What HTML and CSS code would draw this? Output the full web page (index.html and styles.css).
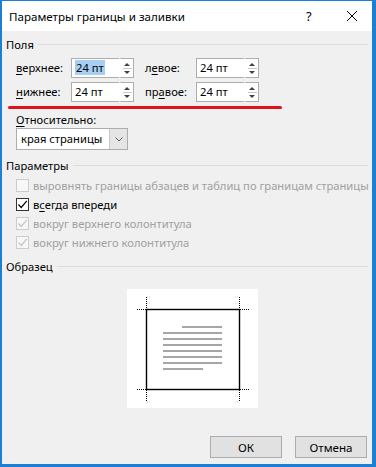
FILE: index.html
```html
<!DOCTYPE html>
<html lang="ru">

<head>
    <meta charset="UTF-8">
    <title>Параметры границы и заливки</title>
    <link rel="stylesheet" href="styles.css">
</head>

<body>
    <div class="window">
        <div class="titlebar">
            <span class="title">Параметры границы и заливки</span>
            <span class="help">?</span>
            <span class="close">
                <svg width="12" height="12" viewBox="0 0 12 12"><path d="M1 1 L11 11 M11 1 L1 11" stroke="#000" stroke-width="1" fill="none"/></svg>
            </span>
        </div>

        <div class="content">
            <div class="group-head"><span>Поля</span><div class="rule"></div></div>

            <div class="margins">
                <label><u>в</u>ерхнее:</label>
                <div class="spin"><div class="field"><span class="selected">24 пт</span></div><div class="arrows"><i class="up"></i><b></b><i class="down"></i></div></div>
                <label>л<u>е</u>вое:</label>
                <div class="spin"><div class="field">24 пт</div><div class="arrows"><i class="up"></i><b></b><i class="down"></i></div></div>
                <label><u>н</u>ижнее:</label>
                <div class="spin"><div class="field">24 пт</div><div class="arrows"><i class="up"></i><b></b><i class="down"></i></div></div>
                <label>пр<u>а</u>вое:</label>
                <div class="spin"><div class="field">24 пт</div><div class="arrows"><i class="up"></i><b></b><i class="down"></i></div></div>
            </div>

            <div class="red-mark"></div>

            <div class="relative-label"><u>О</u>тносительно:</div>
            <div class="select">
                <span class="select-value">края страницы</span>
                <span class="select-btn">
                    <svg width="8" height="5" viewBox="0 0 8 5"><path d="M0.5 0.5 L4 4 L7.5 0.5" stroke="#606060" fill="none"/></svg>
                </span>
            </div>

            <div class="group-head params-head"><span>Параметры</span><div class="rule"></div></div>

            <div class="checks">
                <div class="check disabled"><span class="box"></span><span>выровнять границы абзацев и таблиц по границам страницы</span></div>
                <div class="check"><span class="box"><svg width="11" height="11" viewBox="0 0 11 11"><path d="M1.5 5.5 L4.2 8.5 L9.8 1.8" stroke="#000" stroke-width="1.2" fill="none"/></svg></span><span>в<u>с</u>егда впереди</span></div>
                <div class="check disabled"><span class="box"><svg width="11" height="11" viewBox="0 0 11 11"><path d="M1.5 5.5 L4.2 8.5 L9.8 1.8" stroke="#c4c4c4" stroke-width="1.2" fill="none"/></svg></span><span>вокруг верхнего колонтитула</span></div>
                <div class="check disabled"><span class="box"><svg width="11" height="11" viewBox="0 0 11 11"><path d="M1.5 5.5 L4.2 8.5 L9.8 1.8" stroke="#c4c4c4" stroke-width="1.2" fill="none"/></svg></span><span>вокруг нижнего колонтитула</span></div>
            </div>

            <div class="group-head sample-head"><span>Образец</span><div class="rule"></div></div>

            <div class="preview">
                <svg width="131" height="119" viewBox="0 0 131 119">
                    <rect x="19.5" y="20.5" width="93" height="80" fill="none" stroke="#000" stroke-width="1.4"/>
                    <g fill="#a6a6a6">
                        <rect x="55" y="37" width="40" height="2"/>
                        <rect x="36" y="43" width="59" height="2"/>
                        <rect x="36" y="49" width="59" height="2"/>
                        <rect x="36" y="55" width="59" height="2"/>
                        <rect x="36" y="61" width="59" height="2"/>
                        <rect x="36" y="67" width="59" height="2"/>
                        <rect x="36" y="73" width="59" height="2"/>
                        <rect x="36" y="79" width="40" height="2"/>
                    </g>
                    <g stroke="#000" stroke-width="1" stroke-dasharray="1 1" fill="none">
                        <path d="M10 20.5 H19 M19.5 8 V20"/>
                        <path d="M113 20.5 H122 M112.5 8 V20"/>
                        <path d="M10 100.5 H19 M19.5 101 V113"/>
                        <path d="M113 100.5 H122 M112.5 101 V113"/>
                    </g>
                    <g stroke="#d0d0d0" stroke-width="1" stroke-dasharray="1 1" fill="none">
                        <path d="M20 8 H24 M20 14 H24"/>
                        <path d="M108 8 H112 M108 14 H112"/>
                        <path d="M20 107 H24 M20 113 H24"/>
                        <path d="M108 107 H112 M108 113 H112"/>
                    </g>
                </svg>
            </div>

            <div class="footer">
                <button class="btn">ОК</button>
                <button class="btn">Отмена</button>
            </div>
        </div>
    </div>
</body>

</html>
```

FILE: styles.css
```css
body {
    margin: 0;
    padding: 0;
    background-color: #fff;
    font-family: "Noto Sans", "DejaVu Sans", sans-serif;
    font-size: 11.2px;
    color: #000;
}

.window {
    box-sizing: border-box;
    width: 376px;
    height: 467px;
    border: 2px solid #1c7fd6;
    border-top-width: 1px;
    border-right-width: 4px;
    border-bottom-width: 3px;
    background-color: #f0f0f0;
    display: flex;
    flex-direction: column;
}

.titlebar {
    height: 30px;
    background-color: #fff;
    display: flex;
    align-items: center;
}

.title {
    padding-left: 7px;
    flex: 1;
    font-size: 11.6px;
}

.help {
    width: 20px;
    font-size: 13px;
    margin-right: 20px;
}

.close {
    display: flex;
    margin-right: 14px;
}

.content {
    flex: 1;
    padding: 6px 0 0 4px;
    display: flex;
    flex-direction: column;
}

u {
    text-decoration: underline;
    text-underline-offset: 2px;
}

.group-head {
    height: 16px;
    line-height: 16px;
    display: flex;
    align-items: center;
    gap: 4px;
    padding-right: 4px;
}

.group-head .rule {
    flex: 1;
    height: 1px;
    background-color: #dcdcdc;
    margin-top: -2px;
}

.margins {
    margin-top: 5px;
    margin-left: 10px;
    display: grid;
    grid-template-columns: 55px 63px 62px 63px;
    grid-template-rows: 20px 20px;
    row-gap: 4px;
    align-items: center;
}

.margins label {
    line-height: 20px;
}

.margins label:nth-of-type(2),
.margins label:nth-of-type(4) {
    padding-left: 11px;
}

.spin {
    display: flex;
    height: 20px;
}

.field {
    box-sizing: border-box;
    width: 48px;
    height: 20px;
    border: 1px solid #adadad;
    border-right: none;
    background-color: #fff;
    padding-left: 3px;
    line-height: 18px;
}

.selected {
    background-color: #a6cff3;
    padding: 0 1px;
}

.arrows {
    box-sizing: border-box;
    width: 15px;
    height: 20px;
    border: 1px solid #adadad;
    border-left: 2px solid #fff;
    background-color: #fff;
    display: flex;
    flex-direction: column;
    align-items: center;
    justify-content: center;
    gap: 2px;
}

.arrows b {
    display: block;
    width: 9px;
    height: 1px;
    background-color: #c8c8c8;
}

.arrows i {
    display: block;
    width: 0;
    height: 0;
    border-left: 3px solid transparent;
    border-right: 3px solid transparent;
}

.arrows .up {
    border-bottom: 3px solid #404040;
}

.arrows .down {
    border-top: 3px solid #404040;
}

.red-mark {
    margin-top: 4px;
    margin-left: 2px;
    width: 274px;
    height: 3px;
    border-radius: 2px;
    background-color: #e2121d;
}

.relative-label {
    margin-top: 3px;
    margin-left: 10px;
    line-height: 16px;
}

.select {
    box-sizing: border-box;
    margin-left: 10px;
    width: 112px;
    height: 22px;
    border: 1px solid #adadad;
    background-color: #fff;
    display: flex;
}

.select-value {
    flex: 1;
    padding-left: 4px;
    line-height: 20px;
}

.select-btn {
    width: 17px;
    background-color: #e5e5e5;
    border-left: 1px solid #c8c8c8;
    display: flex;
    align-items: center;
    justify-content: center;
}

.params-head {
    margin-top: 8px;
}

.checks {
    margin-top: 2px;
    margin-left: 10px;
}

.check {
    height: 19px;
    display: flex;
    align-items: center;
    gap: 4px;
    white-space: nowrap;
}

.check .box {
    box-sizing: border-box;
    flex-shrink: 0;
    width: 13px;
    height: 13px;
    border: 1px solid #333;
    background-color: #fff;
    display: flex;
    align-items: center;
    justify-content: center;
}

.check.disabled {
    color: #a0a0a0;
}

.check.disabled .box {
    border-color: #cccccc;
    background-color: #f7f7f7;
}

.sample-head {
    margin-top: 7px;
}

.preview {
    margin-top: 14px;
    margin-left: 121px;
    width: 131px;
    height: 119px;
    background-color: #fff;
    display: flex;
}

.footer {
    margin-top: 28px;
    padding-right: 5px;
    display: flex;
    justify-content: flex-end;
    gap: 13px;
}

.btn {
    box-sizing: border-box;
    width: 72px;
    height: 22px;
    border: 1px solid #adadad;
    background-color: #e1e1e1;
    font-family: "Noto Sans", "DejaVu Sans", sans-serif;
    font-size: 11.6px;
    color: #000;
    padding: 0;
}
```
